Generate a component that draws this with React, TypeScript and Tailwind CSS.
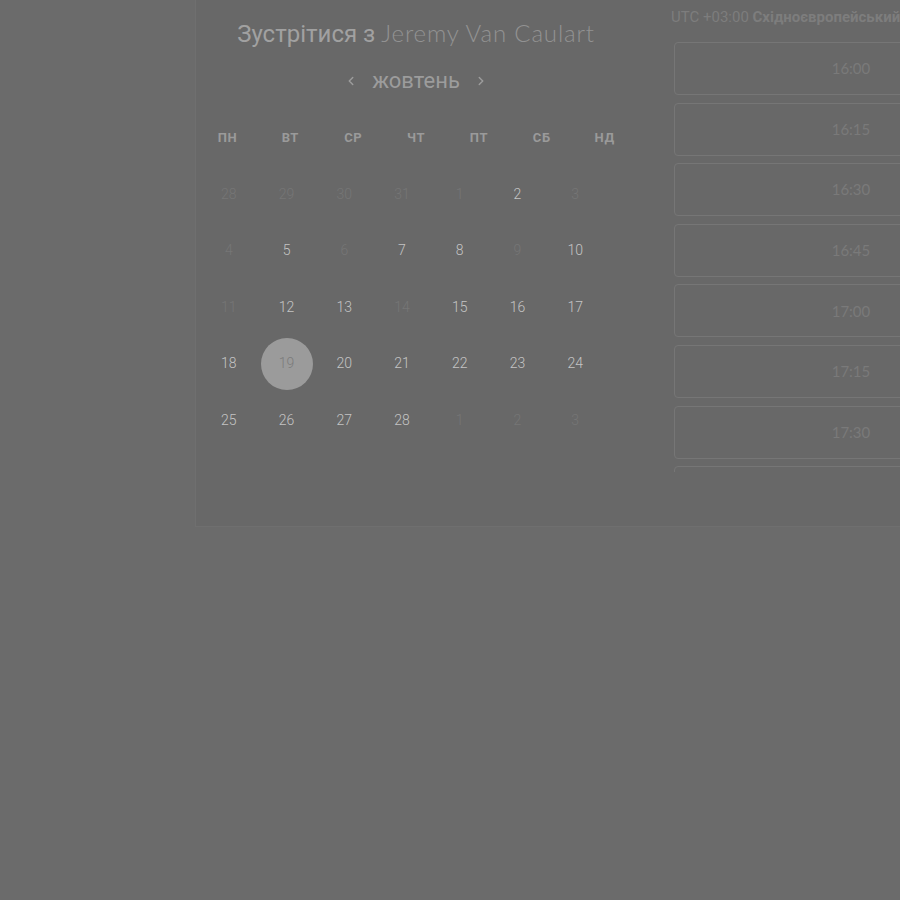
import { ChevronLeft, ChevronRight } from "lucide-react";

type Day = { n: number; on: boolean; selected?: boolean };

const weekdays = ["ПН", "ВТ", "СР", "ЧТ", "ПТ", "СБ", "НД"];

const availableDays = [2, 5, 7, 8, 10, 12, 13, 15, 16, 17, 18, 19, 20, 21, 22, 23, 24, 25, 26, 27, 28];

const buildDays = (): Day[] => {
  const days: Day[] = [];
  [28, 29, 30, 31].forEach((n) => days.push({ n, on: false }));
  for (let n = 1; n <= 28; n++) {
    days.push({ n, on: availableDays.includes(n), selected: n === 19 });
  }
  [1, 2, 3].forEach((n) => days.push({ n, on: false }));
  return days;
};

// last slot is only peeking out of the scroll area
const times = ["16:00", "16:15", "16:30", "16:45", "17:00", "17:15", "17:30", ""];

const App = () => {
  const days = buildDays();

  return (
    <div className="w-[900px] h-[900px] overflow-hidden bg-[#6b6b6b] font-['Roboto',sans-serif]">
      <div className="ml-[195px] w-[860px] h-[527px] flex bg-[#686868] border-l border-b border-[#6f6f6f]">
        {/* calendar */}
        <div className="w-[440px] shrink-0 flex flex-col items-center pt-[17px]">
          <h2 className="text-[24px] leading-[32px] text-[#a1a1a1] whitespace-nowrap">
            Зустрітися з{" "}
            <span className="font-['Lato',sans-serif] font-light text-[#929292] tracking-[0.035em]">
              Jeremy Van Caulart
            </span>
          </h2>

          <div className="mt-[16px] h-[30px] flex items-center gap-[12px] text-[#9c9c9c]">
            <ChevronLeft size={14} strokeWidth={2.5} />
            <span className="text-[22px] leading-[30px] px-[2px]">жовтень</span>
            <ChevronRight size={14} strokeWidth={2.5} />
          </div>

          <div className="mt-[32px] w-full grid grid-cols-7 h-[20px] items-center">
            {weekdays.map((w) => (
              <span
                key={w}
                className="text-center text-[13px] font-bold tracking-[0.04em] text-[#9a9a9a]"
              >
                {w}
              </span>
            ))}
          </div>

          <div className="mt-[18px] w-[404px] self-start ml-[4px] grid grid-cols-7 auto-rows-[56.5px]">
            {days.map((d, i) => (
              <div key={i} className="flex items-center justify-center">
                {d.selected ? (
                  <span className="w-[52px] h-[52px] rounded-full bg-[#9b9b9b] flex items-center justify-center text-[14px] font-light text-[#7b7b7b]">
                    {d.n}
                  </span>
                ) : (
                  <span
                    className={`text-[14px] font-light ${d.on ? "text-[#c4c4c4]" : "text-[#767676]"}`}
                  >
                    {d.n}
                  </span>
                )}
              </div>
            ))}
          </div>
        </div>

        {/* time slots */}
        <div className="flex-1 flex flex-col pl-[35px]">
          <p className="mt-[7px] h-[20px] leading-[20px] text-[15px] text-[#7d7d7d] whitespace-nowrap">
            UTC +03:00 <span className="font-bold">Східноєвропейський час</span>
          </p>
          <div className="mt-[15px] h-[430px] overflow-hidden flex flex-col gap-[7.6px] pl-[3px]">
            {times.map((t, i) => (
              <div
                key={i}
                className="w-[354px] h-[53px] shrink-0 rounded-[4px] border border-[#767676] flex items-center justify-center text-[15px] font-['Lato',sans-serif] text-[#7a7a7a]"
              >
                {t}
              </div>
            ))}
          </div>
        </div>
      </div>
    </div>
  );
};

export default App;
